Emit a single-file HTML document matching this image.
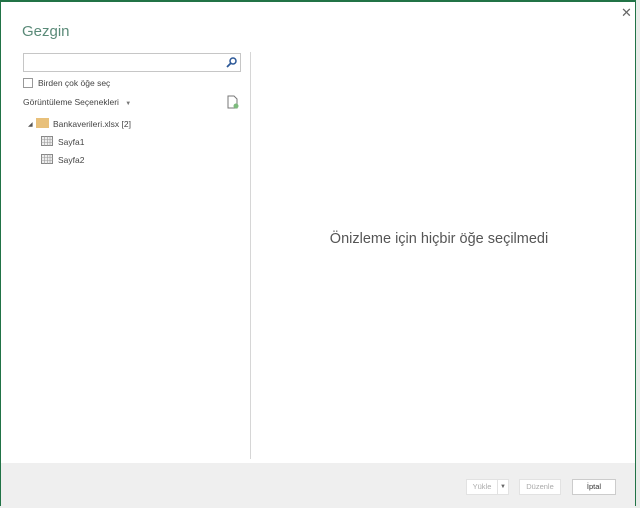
<!DOCTYPE html><html><head><style>
body{margin:0;width:640px;height:506px;overflow:hidden;background:#e8ece9;font-family:"Liberation Sans",sans-serif;position:relative}
.dlg{position:absolute;left:0;top:0;width:636px;height:506px;background:#fff;border:1px solid #217346;border-top:2px solid #217346;border-bottom:none;box-sizing:border-box}
.t{position:absolute;font-size:8.5px;color:#444}
.foot{position:absolute;left:0;top:461px;width:634px;height:45px;background:#efefef}
.btn{position:absolute;top:479px;height:14px;border:1px solid #e2e2e2;background:#fff;font-size:7.5px;color:#aaa;text-align:center;line-height:14px}
</style></head><body>
<div class="dlg">
<div class="foot"></div>
<div style="position:absolute;left:620px;top:3px;font-size:13px;color:#666">✕</div>
<div class="t" style="left:21px;top:21px;font-size:15px;color:#5a8a78">Gezgin</div>
<div style="position:absolute;left:22px;top:51px;width:216px;height:17px;border:1px solid #c6c6c6">
<svg style="position:absolute;right:3px;top:3px" width="11" height="11"><circle cx="7" cy="4" r="3" fill="none" stroke="#2b5797" stroke-width="1.5"/><line x1="5" y1="6" x2="1" y2="10" stroke="#2b5797" stroke-width="1.8"/></svg></div>
<div style="position:absolute;left:22px;top:76px;width:8px;height:8px;border:1px solid #999"></div>
<div class="t" style="left:37px;top:76px">Birden çok öğe seç</div>
<div class="t" style="left:22px;top:95px">Görüntüleme Seçenekleri <span style="font-size:6px;color:#777;margin-left:4px">▼</span></div>
<svg style="position:absolute;left:226px;top:93px" width="12" height="14"><path d="M1 1h6l3 3v9H1z" fill="#fff" stroke="#777"/><circle cx="9" cy="11" r="2.5" fill="#7cba7c"/></svg>
<div style="position:absolute;left:27px;top:119px;font-size:6px;color:#555">◢</div>
<div style="position:absolute;left:35px;top:116px;width:13px;height:10px;background:#e8c07a"></div>
<div class="t" style="left:52px;top:117px">Bankaverileri.xlsx [2]</div>
<svg style="position:absolute;left:40px;top:134px" width="12" height="10"><rect x=".5" y=".5" width="11" height="9" fill="#eee" stroke="#888"/><path d="M0 3.5h12M0 6.5h12M3.5 0v10M6.5 0v10M9 0v10" stroke="#999" stroke-width=".6"/></svg>
<div class="t" style="left:57px;top:135px">Sayfa1</div>
<svg style="position:absolute;left:40px;top:152px" width="12" height="10"><rect x=".5" y=".5" width="11" height="9" fill="#eee" stroke="#888"/><path d="M0 3.5h12M0 6.5h12M3.5 0v10M6.5 0v10M9 0v10" stroke="#999" stroke-width=".6"/></svg>
<div class="t" style="left:57px;top:153px">Sayfa2</div>
<div style="position:absolute;left:249px;top:50px;width:1px;height:407px;background:#d6d6d6"></div>
<div class="t" style="left:250px;width:376px;text-align:center;top:229px;font-size:14.5px;color:#555">Önizleme için hiçbir öğe seçilmedi</div>
</div>
<div class="btn" style="left:466px;width:30px">Yükle</div>
<div class="btn" style="left:497px;width:10px;color:#666;font-size:6px">▼</div>
<div class="btn" style="left:519px;width:40px">Düzenle</div>
<div class="btn" style="left:572px;width:42px;border-color:#ccc;color:#333">İptal</div>
</body></html>
